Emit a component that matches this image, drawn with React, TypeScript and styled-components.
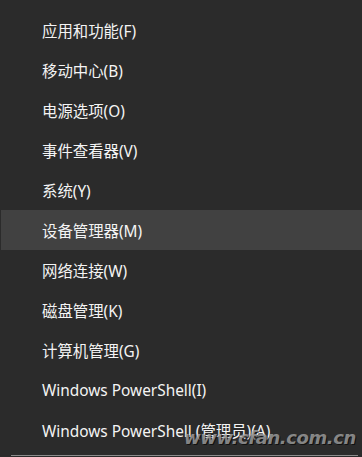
import React from 'react'
import styled, { createGlobalStyle } from 'styled-components'

const GlobalStyle = createGlobalStyle`
  html, body {
    margin: 0;
    padding: 0;
    background: #2b2b2b;
  }
`

const Menu = styled.div`
  position: relative;
  width: 362px;
  height: 457px;
  box-sizing: border-box;
  padding-top: 10px;
  background: #2b2b2b;
  font-family: 'Noto Sans', 'Noto Sans CJK SC', sans-serif;
  overflow: hidden;
`

const Item = styled.div<{ $active?: boolean }>`
  display: flex;
  align-items: center;
  height: 40px;
  padding-left: 41px;
  margin-left: 1px;
  font-size: 15.4px;
  color: #f4f4f4;
  background: ${(p) => (p.$active ? '#414141' : 'transparent')};
  white-space: nowrap;
`

const Separator = styled.div`
  height: 1px;
  margin: 5px 4px 0 11px;
  background: #8c8c8c;
`

const Watermark = styled.div`
  position: absolute;
  right: 6px;
  bottom: 9px;
  font-family: 'DejaVu Sans', sans-serif;
  font-size: 18px;
  font-weight: bold;
  font-style: italic;
  letter-spacing: -0.4px;
  color: rgba(170, 170, 170, 0.75);
  text-shadow: 1px 1px 0 rgba(0, 0, 0, 0.6);
`

const items = [
  '应用和功能(F)',
  '移动中心(B)',
  '电源选项(O)',
  '事件查看器(V)',
  '系统(Y)',
  '设备管理器(M)',
  '网络连接(W)',
  '磁盘管理(K)',
  '计算机管理(G)',
  'Windows PowerShell(I)',
  'Windows PowerShell (管理员)(A)',
]

export default function App() {
  return (
    <>
      <GlobalStyle />
      <Menu>
        {items.map((label, i) => (
          <Item key={label} $active={i === 5}>
            {label}
          </Item>
        ))}
        <Separator />
        <Watermark>www.cfan.com.cn</Watermark>
      </Menu>
    </>
  )
}
